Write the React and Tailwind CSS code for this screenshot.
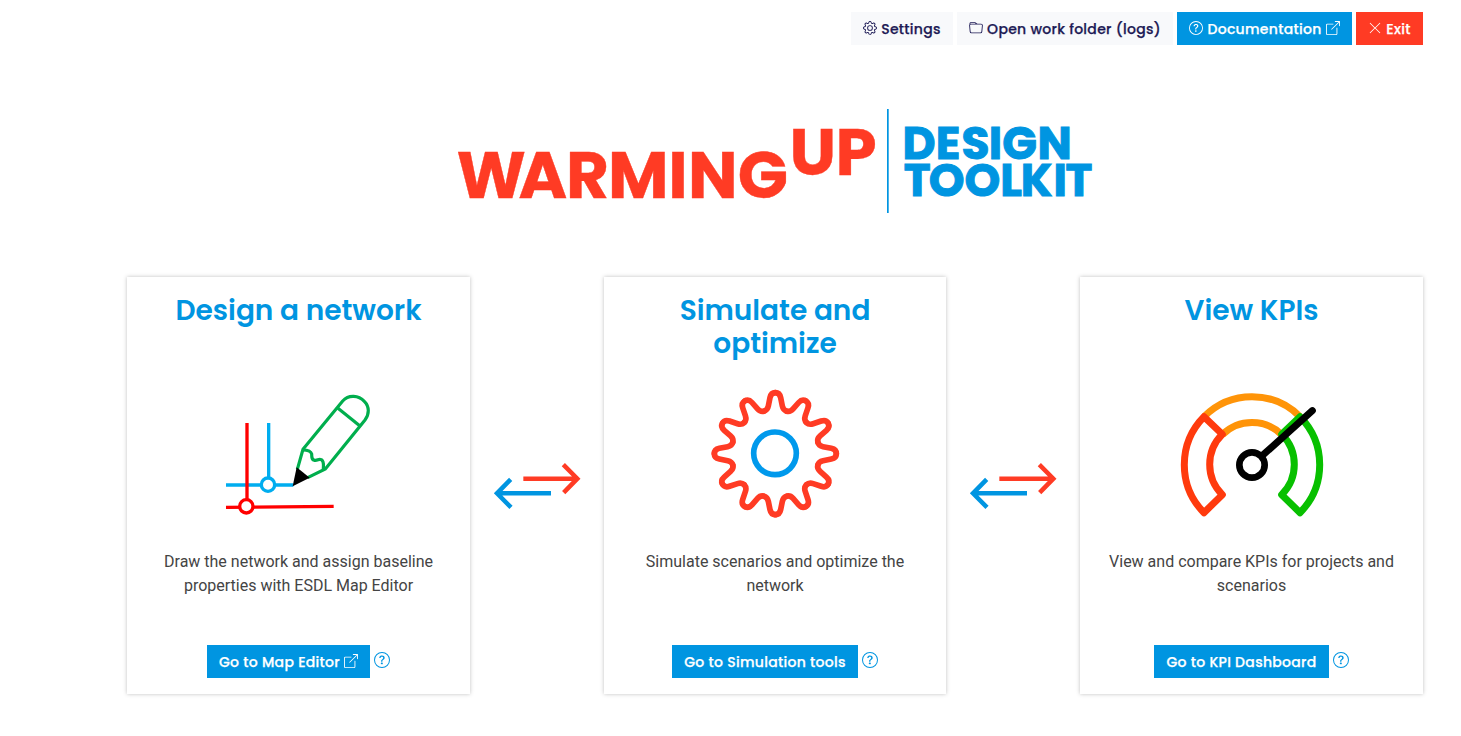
import React from "react";
import { BsGear, BsFolder, BsQuestionCircle, BsBoxArrowUpRight, BsXLg } from "react-icons/bs";

const poppins = "font-['Poppins','Inter',sans-serif]";

function Logo() {
  return (
    <svg width="660" height="120" viewBox="440 100 660 120" className="font-['Poppins','Inter',sans-serif]">
      <g fill="#ff3b24" stroke="#ff3b24" strokeWidth="0.4" fontWeight="700" fontSize="66">
        <text x="456.5 518.5 566 608 668.2 688 737.7" y="197.8">WARMING</text>
        <text x="789.5 835.5" y="174.8">UP</text>
      </g>
      <rect x="887" y="109" width="1.7" height="104" fill="#0095e1" />
      <g fill="#0095e1" stroke="#0095e1" strokeWidth="1" fontWeight="700" fontSize="45.5">
        <text x="902.5 935.8 961.5 988.8 1002.3 1037.5" y="158.5">DESIGN</text>
        <text x="903.8 928.7 964.4 1000.2 1020.8 1053.5 1065.5" y="196.3">TOOLKIT</text>
      </g>
    </svg>
  );
}

function NetworkDrawing() {
  return (
    <svg width="180" height="150" viewBox="0 0 540 450" fill="none" strokeWidth="10">
      <path d="M176 129V295M48 315H250" stroke="#00adef" />
      <path d="M111 129V360M48 382L371 379" stroke="#f00" />
      <circle cx="174" cy="314" r="20" fill="#fff" stroke="#00adef" />
      <circle cx="109" cy="379" r="20" fill="#fff" stroke="#f00" />
      <g stroke="#00ae4d" strokeWidth="9.5">
        <path d="M262 268L279 208L398 63C416 43 446 46 463 64C479 80 478 103 465 120L346 267L293 293" />
        <path d="M383 84L450 138" />
        <path d="M279 210C292 210 302 211 305 222C306 232 303 238 313 241C324 243 325 235 334 239C343 245 340 254 340 267" />
      </g>
      <path d="M260 262L299 293L248 319Z" fill="#000" />
    </svg>
  );
}

const gearHalf = "M0 -183C9 -183 14 -178 16 -168L21 -143C23 -133 27 -129.4 34.2 -127.5";
const gearAngles = Array.from({ length: 12 }, (_, i) => i * 30);

function GearDrawing() {
  return (
    <svg width="160" height="150" viewBox="0 0 480 450" fill="none">
      <g transform="translate(226 221)" stroke="#ff3b24" strokeWidth="17" strokeLinecap="round">
        {gearAngles.map((a) => (
          <g key={a} transform={`rotate(${a})`}>
            <path d={gearHalf} />
            <path d={gearHalf} transform="scale(-1 1)" />
          </g>
        ))}
      </g>
      <circle cx="225" cy="220" r="64" stroke="#0099ec" strokeWidth="17" />
    </svg>
  );
}

function GaugeDrawing() {
  return (
    <svg width="170" height="150" viewBox="0 0 510 450" fill="none" strokeWidth="21" strokeLinejoin="round">
      <path d="M117 110A203 203 0 0 1 405 110M172 164A127 127 0 0 1 350 164" stroke="#ff9408" />
      <path d="M117 110A205 205 0 0 0 117 398L172 344A127 127 0 0 1 172 163Z" stroke="#ff3a0d" />
      <path d="M405 110A205 205 0 0 1 405 398L350 344A127 127 0 0 0 350 163Z" stroke="#08c000" />
      <path d="M295 224L442 92" stroke="#000" strokeWidth="21" strokeLinecap="round" />
      <circle cx="261" cy="255" r="38" fill="#fff" stroke="#000" strokeWidth="20" />
    </svg>
  );
}

function Arrows() {
  return (
    <div className="flex justify-center pt-[173px] pl-[6px]">
      <svg width="120" height="70" viewBox="0 0 360 210" fill="none" strokeWidth="13.5">
        <path d="M130 86H294M250 44L292 86L251 128" stroke="#ff3b24" />
        <path d="M213 130H50M92 88L51 130L93 172" stroke="#0095e1" />
      </svg>
    </div>
  );
}

function Button({ className, children }) {
  return (
    <button className={`flex h-[33px] items-center justify-center gap-1 whitespace-nowrap pt-0.5 text-[14px] font-medium tracking-[0.3px] [-webkit-text-stroke:0.25px_currentColor] ${poppins} ${className}`}>
      {children}
    </button>
  );
}

function Card({ title, drawing, text, action }) {
  return (
    <section className="flex h-[417px] flex-col items-center bg-white pt-[17px] shadow-[0_0_4px_rgba(0,0,0,0.25)]">
      <h2 className={`h-[86px] text-center text-[28px] leading-[33px] font-semibold text-[#0095e1] ${poppins}`}>{title}</h2>
      <div className="flex h-[170px] w-full justify-center">{drawing}</div>
      <p className="h-[95px] text-center font-['Roboto',sans-serif] text-base leading-6 text-[#444]">{text}</p>
      <div className="flex gap-1">
        {action}
        <BsQuestionCircle className="mt-[7px] size-4 text-[#0095e1]" />
      </div>
    </section>
  );
}

export default function App() {
  return (
    <div className="h-[736px] w-[1461px] overflow-hidden bg-white pr-[38px] pl-[127px]">
      <header className="flex justify-end gap-1 pt-3">
        <Button className="w-[102px] bg-[#f8f9fb] text-[#1d1a55]">
          <BsGear className="mb-1 size-[14px]" />
          <span>Settings</span>
        </Button>
        <Button className="w-[216px] bg-[#f8f9fb] text-[#1d1a55]">
          <BsFolder className="mb-1 size-[14px]" />
          <span>Open work folder (logs)</span>
        </Button>
        <Button className="w-[175px] bg-[#0095e1] text-white">
          <BsQuestionCircle className="mb-1 size-[14px]" />
          <span>Documentation</span>
          <BsBoxArrowUpRight className="mb-1 size-[14px]" />
        </Button>
        <Button className="w-[67px] bg-[#ff3b24] text-white">
          <BsXLg className="mb-1 size-[14px]" />
          <span>Exit</span>
        </Button>
      </header>

      <div className="flex h-[232px] pt-[55px] pl-[313px]">
        <Logo />
      </div>

      <main className="grid grid-cols-[343px_134px_342px_134px_343px]">
        <Card
          title="Design a network"
          drawing={<div className="mr-[-3px]"><NetworkDrawing /></div>}
          text={<>Draw the network and assign baseline<br />properties with ESDL Map Editor</>}
          action={
            <Button className="w-[163px] bg-[#0095e1] text-white">
              <span>Go to Map Editor</span>
              <BsBoxArrowUpRight className="mb-1 size-[14px]" />
            </Button>
          }
        />
        <Arrows />
        <Card
          title={<>Simulate and<br />optimize</>}
          drawing={<div className="ml-[10px]"><GearDrawing /></div>}
          text={<>Simulate scenarios and optimize the<br />network</>}
          action={
            <Button className="w-[186px] bg-[#0095e1] text-white">
              <span>Go to Simulation tools</span>
            </Button>
          }
        />
        <Arrows />
        <Card
          title="View KPIs"
          drawing={<div className="mr-[3px]"><GaugeDrawing /></div>}
          text={<>View and compare KPIs for projects and<br />scenarios</>}
          action={
            <Button className="w-[175px] bg-[#0095e1] text-white">
              <span>Go to KPI Dashboard</span>
            </Button>
          }
        />
      </main>
    </div>
  );
}
